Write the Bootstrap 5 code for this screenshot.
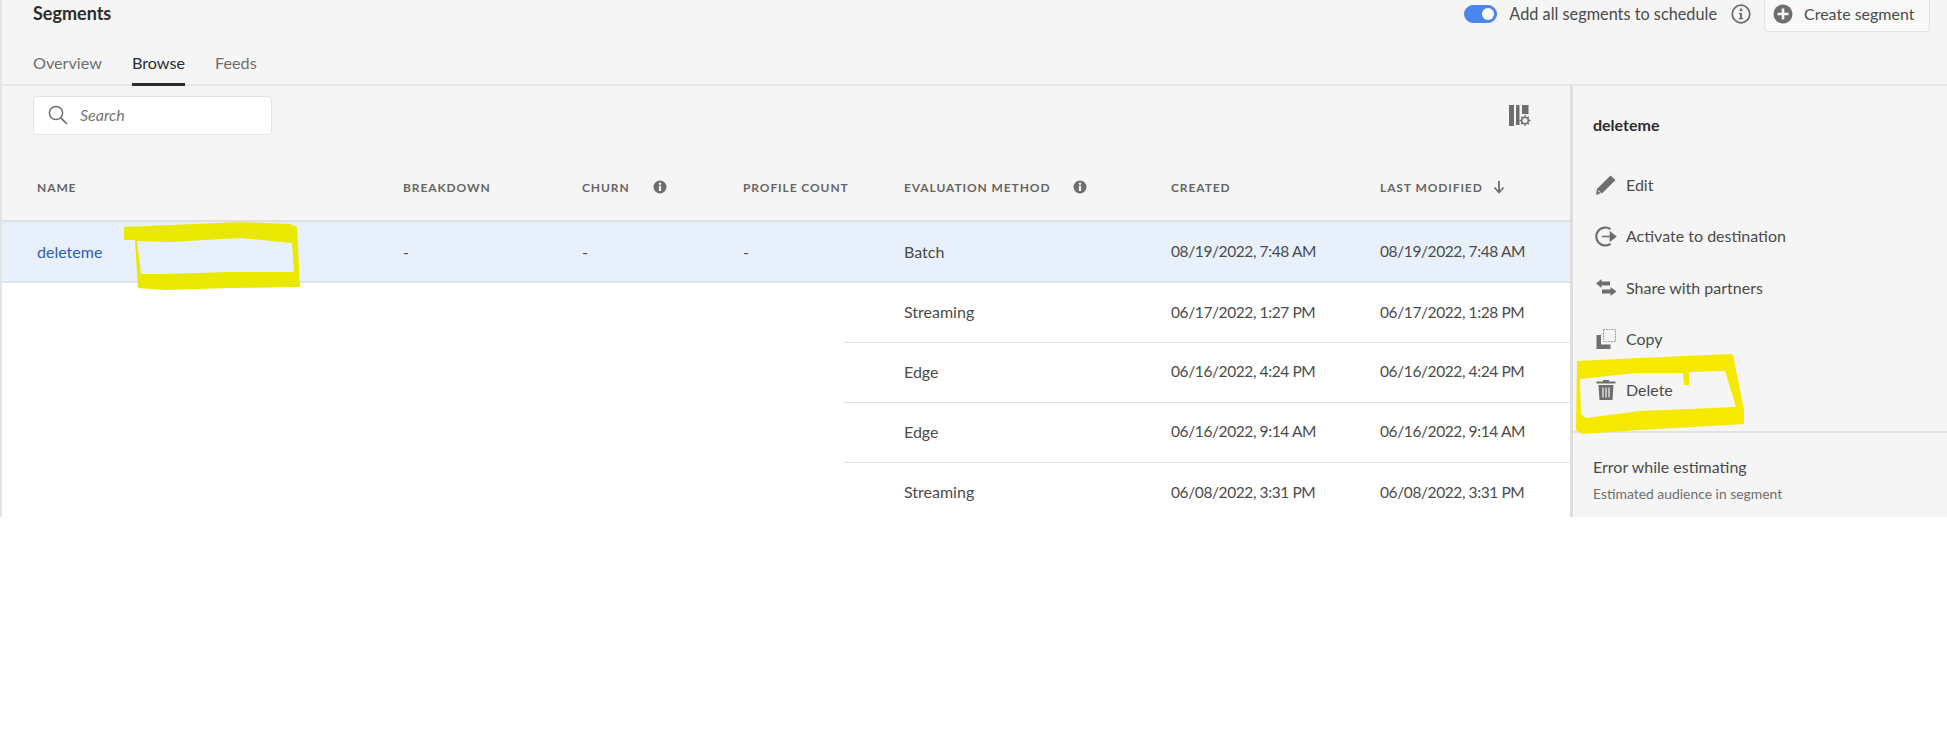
<!doctype html>
<html lang="en">
<head>
<meta charset="utf-8">
<title>Segments</title>
<link rel="stylesheet" href="https://cdn.jsdelivr.net/npm/bootstrap@5.3.0/dist/css/bootstrap.min.css">
<style>
html,body{height:750px;overflow:hidden;background:#fff}
body{font-family:"Lato","Liberation Sans",sans-serif;font-size:16px;color:#4b4b4b;position:relative}
.app-shell{height:517px;overflow:hidden;background:#f5f5f5;border-left:2px solid #e4e4e4}
.app-head{height:90px;margin-top:-4px;border-bottom:2px solid #e6e6e6;padding-left:31px;padding-right:17px}
.title-row{height:36px}
.app-title{font-size:18px;font-weight:700;color:#2c2c2c;margin:0}
.switch-wrap{padding:0;margin:0 12px 0 0;min-height:0;display:flex}
.switch-wrap .form-check-input{width:33px;height:18px;margin:0;float:none;background-color:#4a86ec;border-color:#4a86ec}
.sched-label{font-size:16.3px}
.info-gap{margin:0 13px 0 14px}
.create-btn{height:36px;width:166px;background:#f8f8f8;border:1px solid #e3e3e3;border-radius:4px;color:#4b4b4b;font-size:16px;padding:0 0 0 8px;gap:11px}
.tab-row{height:54px;gap:30px}
.tab-link{font-size:16.2px;color:#6e6e6e;height:54px;line-height:62px;padding:0;border:0;text-decoration:none}
.tab-link.is-on{color:#2c2c2c;border-bottom:3px solid #2c2c2c}
.body-row{height:431px}
.left-col{width:1568px;flex:none}
.tool-row{height:49px;padding:10px 39px 0 31px}
.search-box{width:239px;height:39px;background:#fff;border:1px solid #e3e3e3;border-radius:4px;padding:0 0 2px 14px;gap:12px;font-size:16px;font-style:italic;color:#757575}
.seg-table{table-layout:fixed;width:1568px;margin:0;--bs-table-bg:#fff;--bs-table-color:#4b4b4b;--bs-table-border-color:#e1e1e1}
.seg-table th{height:86px;background:#f5f5f5;box-shadow:none;font-size:12px;font-weight:700;letter-spacing:.9px;text-transform:uppercase;color:#666;vertical-align:middle;padding:21px 0 0 4px;border-bottom:2px solid #dfdfdf;white-space:nowrap}
.seg-table td{height:60px;font-size:16px;vertical-align:middle;padding:0 0 0 4px;border-bottom:1px solid #e1e1e1;white-space:nowrap;box-shadow:none}
.seg-table th:first-child,.seg-table td:first-child{padding-left:35px}
.seg-table tr.row-on td{background:#e8f0fb;height:61px;border-bottom:2px solid #dfe3ea}
.seg-table td.blank-cell{border-bottom:0}
.seg-table td.pad-cell{padding-left:60px}
.seg-table td.date-cell{font-size:15.5px;letter-spacing:-.4px}
.seg-table tr:last-child td{border-bottom:0}
.seg-link{color:#2c5fb8;text-decoration:none}
.th-ico{margin-left:23px;vertical-align:-2px}
.th-arrow{margin-left:10px;vertical-align:-2px}
.side-col{flex:1 1 auto;border-left:3px solid #dedede;background:#f5f5f5}
.side-title{font-weight:700;font-size:16px;color:#2c2c2c;line-height:20px;padding:29px 0 0 20px;margin-bottom:24.5px}
.act-item{height:51.3px;padding-left:22px;gap:9px;font-size:16px;color:#4b4b4b}
.act-ico{width:22px;flex:none;display:block}
.side-rule{margin:15px 0 0;border:0;border-top:2px solid #e2e2e2;opacity:1}
.est-main{padding:23px 0 0 20px;line-height:22px;font-size:16px;color:#4b4b4b}
.est-sub{padding:7px 0 0 20px;font-size:13.9px;line-height:18px;color:#6e6e6e}
.marker-layer{position:absolute;left:0;top:0;width:1947px;height:750px;pointer-events:none}
</style>
</head>
<body>
<div class="app-shell">
  <header class="app-head">
    <div class="title-row d-flex align-items-center justify-content-between">
      <h1 class="app-title">Segments</h1>
      <div class="d-flex align-items-center">
        <div class="form-check form-switch switch-wrap"><input class="form-check-input" type="checkbox" role="switch" checked aria-label="Add all segments to schedule"></div>
        <span class="sched-label">Add all segments to schedule</span>
        <svg class="info-gap" width="20" height="20" viewBox="0 0 20 20"><circle cx="10" cy="10" r="8.8" fill="none" stroke="#6e6e6e" stroke-width="1.8"/><circle cx="10" cy="6" r="1.4" fill="#6e6e6e"/><path d="M8 9h3v5h1.2v1.2H7.8V14H9v-3.8H8z" fill="#6e6e6e"/></svg>
        <button class="btn create-btn d-flex align-items-center" type="button">
          <svg width="20" height="20" viewBox="0 0 20 20"><circle cx="10" cy="10" r="9.5" fill="#6e6e6e"/><path d="M8.7 4.5h2.6v4.2h4.2v2.6h-4.2v4.2H8.7v-4.2H4.5V8.700h4.200z" fill="#f8f8f8"/></svg>
          <span>Create segment</span>
        </button>
      </div>
    </div>
    <nav class="tab-row d-flex align-items-start">
      <a class="tab-link" href="#">Overview</a>
      <a class="tab-link is-on" href="#">Browse</a>
      <a class="tab-link" href="#">Feeds</a>
    </nav>
  </header>
  <div class="body-row d-flex">
    <div class="left-col">
      <div class="tool-row d-flex justify-content-between align-items-start">
        <div class="search-box d-flex align-items-center">
          <svg width="20" height="20" viewBox="0 0 20 20"><circle cx="8" cy="8" r="6.6" fill="none" stroke="#6e6e6e" stroke-width="1.5"/><path d="M12.800 12.800 19 19" stroke="#6e6e6e" stroke-width="1.7" fill="none"/></svg>
          <span>Search</span>
        </div>
        <svg width="22" height="22" viewBox="0 0 22 22" style="margin-top:9px">
          <rect x="0" y="0" width="5" height="21" fill="#6e6e6e"/><rect x="7" y="0" width="3.500" height="20" fill="#6e6e6e"/><rect x="13" y="0" width="6.500" height="9" fill="#6e6e6e"/>
          <circle cx="16" cy="15.500" r="3.300" fill="none" stroke="#6e6e6e" stroke-width="1.600"/><path d="M16 10v2M16 19v2M10.500 15.500h2M19.500 15.500h2M12.200 11.700l1.400 1.400M18.400 17.900l1.400 1.400M12.200 19.300l1.400-1.400M18.400 13.100l1.400-1.400" stroke="#6e6e6e" stroke-width="1.300"/>
        </svg>
      </div>
      <table class="table seg-table">
        <colgroup><col style="width:397px"><col style="width:179px"><col style="width:161px"><col style="width:105px"><col style="width:56px"><col style="width:267px"><col style="width:209px"><col style="width:194px"></colgroup>
        <thead>
          <tr>
            <th>Name</th><th>Breakdown</th>
            <th>Churn<svg class="th-ico" width="14" height="14" viewBox="0 0 14 14"><circle cx="7" cy="7" r="6.500" fill="#6e6e6e"/><circle cx="7" cy="3.700" r="1.200" fill="#f5f5f5"/><rect x="5.900" y="5.800" width="2.200" height="5.200" fill="#f5f5f5"/></svg></th>
            <th colspan="2">Profile count</th>
            <th>Evaluation method<svg class="th-ico" width="14" height="14" viewBox="0 0 14 14"><circle cx="7" cy="7" r="6.500" fill="#6e6e6e"/><circle cx="7" cy="3.700" r="1.200" fill="#f5f5f5"/><rect x="5.900" y="5.800" width="2.200" height="5.200" fill="#f5f5f5"/></svg></th>
            <th>Created</th>
            <th>Last modified<svg class="th-arrow" width="12" height="14" viewBox="0 0 12 14"><path d="M6 1v11M1.500 7.500 6 12.500l4.500-5" fill="none" stroke="#6e6e6e" stroke-width="1.800"/></svg></th>
          </tr>
        </thead>
        <tbody>
          <tr class="row-on"><td><a class="seg-link" href="#">deleteme</a></td><td>-</td><td>-</td><td colspan="2">-</td><td>Batch</td><td class="date-cell">08/19/2022, 7:48 AM</td><td class="date-cell">08/19/2022, 7:48 AM</td></tr>
          <tr><td class="blank-cell" colspan="4"></td><td class="pad-cell" colspan="2">Streaming</td><td class="date-cell">06/17/2022, 1:27 PM</td><td class="date-cell">06/17/2022, 1:28 PM</td></tr>
          <tr><td class="blank-cell" colspan="4"></td><td class="pad-cell" colspan="2">Edge</td><td class="date-cell">06/16/2022, 4:24 PM</td><td class="date-cell">06/16/2022, 4:24 PM</td></tr>
          <tr><td class="blank-cell" colspan="4"></td><td class="pad-cell" colspan="2">Edge</td><td class="date-cell">06/16/2022, 9:14 AM</td><td class="date-cell">06/16/2022, 9:14 AM</td></tr>
          <tr><td class="blank-cell" colspan="4"></td><td class="pad-cell" colspan="2">Streaming</td><td class="date-cell">06/08/2022, 3:31 PM</td><td class="date-cell">06/08/2022, 3:31 PM</td></tr>
        </tbody>
      </table>
    </div>
    <aside class="side-col">
      <div class="side-title">deleteme</div>
      <div class="act-item d-flex align-items-center">
        <svg class="act-ico" width="22" height="22" viewBox="0 0 22 22"><path d="M15.500 1.500 20.500 6 8 18.500 2.500 20.500 1 20.800l.9-5.800z" fill="#6e6e6e"/><path d="M2.800 16.200 5.800 19" stroke="#f5f5f5" stroke-width="1"/></svg><span>Edit</span>
      </div>
      <div class="act-item d-flex align-items-center">
        <svg class="act-ico" width="22" height="22" viewBox="0 0 22 22"><path d="M15.500 4.200A9 9 0 1 0 15.500 18.800" fill="none" stroke="#6e6e6e" stroke-width="2.200"/><path d="M7 11.500h12M15.500 7.500l5 4-5 4z" fill="#6e6e6e" stroke="#6e6e6e" stroke-width="1.600"/></svg><span>Activate to destination</span>
      </div>
      <div class="act-item d-flex align-items-center">
        <svg class="act-ico" width="22" height="22" viewBox="0 0 22 22"><path d="M6.500 2 1 6.500l5.500 4.500V8.500H15v-4H6.500zM15.500 10v2.500H7v4h8.500V19l6-4.500z" fill="#6e6e6e"/></svg><span>Share with partners</span>
      </div>
      <div class="act-item d-flex align-items-center">
        <svg class="act-ico" width="22" height="22" viewBox="0 0 22 22"><rect x="8.500" y="1.500" width="12" height="12" fill="none" stroke="#8a8a8a" stroke-width="1" stroke-dasharray="1.500 1.200"/><path d="M1.500 7H6v9.500h9.500V21h-14z" fill="#6e6e6e"/></svg><span>Copy</span>
      </div>
      <div class="act-item d-flex align-items-center">
        <svg class="act-ico" width="22" height="22" viewBox="0 0 22 22"><path d="M8 2.500V1h6v1.500h6.500V4.500h-19V2.500zM3.500 6h15l-1 15h-13z" fill="#6e6e6e"/><path d="M8 8.500v10M11 8.500v10M14 8.500v10" stroke="#f5f5f5" stroke-width="1.200"/></svg><span>Delete</span>
      </div>
      <hr class="side-rule">
      <div class="est-main">Error while estimating</div>
      <div class="est-sub">Estimated audience in segment</div>
    </aside>
  </div>
</div>
<svg class="marker-layer" viewBox="0 0 1947 750" aria-hidden="true">
  <path fill="#e9e800" fill-rule="evenodd" d="M124 227 170 225 240 222 290 224 297 227 300 287 230 288 165 290 138 288 135 240 124 240ZM137 241 170 242 240 238 292 243 294 272 230 272 165 274 141 274Z"/>
  <path fill="#f5e900" fill-rule="evenodd" d="M1577 361 1640 358 1730 354 1733 355 1744 410 1744 424 1640 430 1582 434 1576 430ZM1580 379 1636 373 1683 373 1684 385 1689 385 1689 372 1725 371 1736 407 1640 411 1586 418 1581 414Z"/>
</svg>
<script src="https://cdn.jsdelivr.net/npm/bootstrap@5.3.0/dist/js/bootstrap.bundle.min.js"></script>
</body>
</html>
